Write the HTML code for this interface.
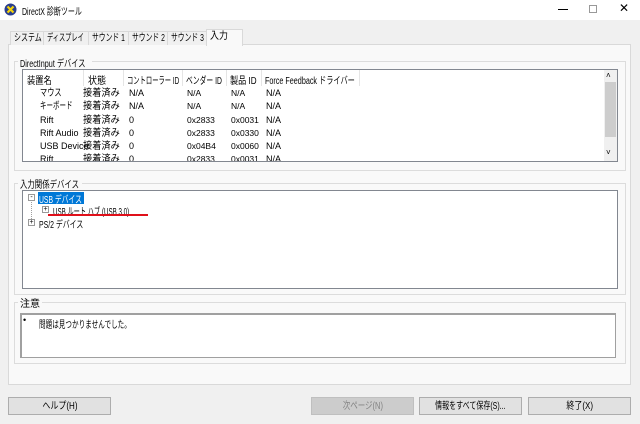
<!DOCTYPE html>
<html><head><meta charset="utf-8"><style>
*{margin:0;padding:0;box-sizing:border-box}
body{width:640px;height:424px;background:#f0f0f0;font-family:"Liberation Sans","Noto Sans CJK JP",sans-serif;font-size:9px;color:#000;position:relative;overflow:hidden}
.a{position:absolute;white-space:nowrap}
.s{display:inline-block;transform-origin:0 50%;white-space:nowrap;font-size:10px}
.grp{position:absolute;border:1px solid #dcdcdc}
.box{position:absolute;background:#fff;border:1px solid #828790}
.btn{position:absolute;background:#e1e1e1;border:1px solid #adadad;text-align:center;line-height:16px;height:18px}
.tab{position:absolute;top:31px;height:14px;line-height:13px;border:1px solid #d9d9d9;border-bottom:none;background:#f0f0f0;padding:0 3px;overflow:visible}
.r{line-height:13.3px;height:74px;overflow:hidden;top:87px}
</style></head><body>
<div class="a" style="left:0;top:0;width:640px;height:20px;background:#fff"></div>
<svg class="a" style="left:4px;top:3px" width="13" height="13"><circle cx="6.5" cy="6.5" r="6" fill="#2a3f8f"/><path d="M3.5 3.5L9.5 9.5M9.5 3.5L3.5 9.5" stroke="#f3d20a" stroke-width="2.2"/></svg>
<div class="a" style="left:22px;top:3px"><span class="s" style="transform:scaleX(.7)">DirectX 診断ツール</span></div>
<div class="a" style="left:558px;top:9px;width:10px;height:1px;background:#000"></div>
<div class="a" style="left:589px;top:5px;width:8px;height:8px;border:1px solid #999"></div>
<div class="a" style="left:619px;top:1px;font-size:12px">✕</div>

<div class="grp" style="left:8px;top:44px;width:623px;height:341px;border-color:#d9d9d9;background:#f9f9f9"></div>
<div class="tab" style="left:10px;width:34px"><span class="s" style="transform:scaleX(.7)">システム</span></div>
<div class="tab" style="left:43px;width:46px"><span class="s" style="transform:scaleX(.62)">ディスプレイ</span></div>
<div class="tab" style="left:88px;width:41px"><span class="s" style="transform:scaleX(.68)">サウンド 1</span></div>
<div class="tab" style="left:128px;width:40px"><span class="s" style="transform:scaleX(.68)">サウンド 2</span></div>
<div class="tab" style="left:167px;width:40px"><span class="s" style="transform:scaleX(.68)">サウンド 3</span></div>
<div class="tab" style="left:206px;top:29px;height:17px;width:37px;background:#f9f9f9;z-index:2"><span class="s" style="transform:scaleX(.9)">入力</span></div>

<div class="grp" style="left:14px;top:61px;width:612px;height:110px"></div>
<div class="a" style="left:18px;top:55px;background:#f9f9f9;padding:0 2px;width:74px"><span class="s" style="transform:scaleX(.72)">DirectInput デバイス</span></div>
<div class="box" style="left:22px;top:69px;width:596px;height:93px"></div>
<div class="a" style="left:604px;top:70px;width:13px;height:91px;background:#f0f0f0"></div>
<div class="a" style="left:605px;top:82px;width:11px;height:55px;background:#cdcdcd"></div>
<div class="a" style="left:606px;top:71px;font-size:8px">˄</div>
<div class="a" style="left:606px;top:148px;font-size:8px">˅</div>
<div class="a" style="left:23px;top:70px;width:337px;height:16px;border-right:1px solid #e5e5e5"></div>
<div class="a" style="left:83px;top:70px;height:16px;border-left:1px solid #e5e5e5"></div>
<div class="a" style="left:123px;top:70px;height:16px;border-left:1px solid #e5e5e5"></div>
<div class="a" style="left:182px;top:70px;height:16px;border-left:1px solid #e5e5e5"></div>
<div class="a" style="left:226px;top:70px;height:16px;border-left:1px solid #e5e5e5"></div>
<div class="a" style="left:261px;top:70px;height:16px;border-left:1px solid #e5e5e5"></div>
<div class="a" style="left:27px;top:72px"><span class="s" style="transform:scaleX(.83)">装置名</span></div>
<div class="a" style="left:88px;top:72px"><span class="s" style="transform:scaleX(.9)">状態</span></div>
<div class="a" style="left:127px;top:72px"><span class="s" style="transform:scaleX(.63)">コントローラー ID</span></div>
<div class="a" style="left:186px;top:72px"><span class="s" style="transform:scaleX(.68)">ベンダー ID</span></div>
<div class="a" style="left:230px;top:72px"><span class="s" style="transform:scaleX(.81)">製品 ID</span></div>
<div class="a" style="left:265px;top:72px"><span class="s" style="transform:scaleX(.72)">Force Feedback ドライバー</span></div>
<div class="a r" style="left:40px"><span class="s" style="transform:scaleX(.72)">マウス</span><br><span class="s" style="transform:scaleX(.65)">キーボード</span><br>Rift<br>Rift Audio<br>USB Device<br>Rift</div>
<div class="a r" style="left:83px;width:40px;background:transparent"><span class="s" style="transform:scaleX(.92)">接着済み</span><br><span class="s" style="transform:scaleX(.92)">接着済み</span><br><span class="s" style="transform:scaleX(.92)">接着済み</span><br><span class="s" style="transform:scaleX(.92)">接着済み</span><br><span class="s" style="transform:scaleX(.92)">接着済み</span><br><span class="s" style="transform:scaleX(.92)">接着済み</span></div>
<div class="a r" style="left:129px">N/A<br>N/A<br>0<br>0<br>0<br>0</div>
<div class="a r" style="left:187px;font-size:8.5px">N/A<br>N/A<br>0x2833<br>0x2833<br>0x04B4<br>0x2833</div>
<div class="a r" style="left:231px;font-size:8.5px">N/A<br>N/A<br>0x0031<br>0x0330<br>0x0060<br>0x0031</div>
<div class="a r" style="left:266px">N/A<br>N/A<br>N/A<br>N/A<br>N/A<br>N/A</div>

<div class="grp" style="left:14px;top:183px;width:612px;height:112px"></div>
<div class="a" style="left:18px;top:176px;background:#f9f9f9;padding:0 2px;width:64px"><span class="s" style="transform:scaleX(.74)">入力関係デバイス</span></div>
<div class="box" style="left:22px;top:190px;width:596px;height:99px"></div>
<div class="a" style="left:31px;top:199px;width:1px;height:24px;border-left:1px dotted #a0a0a0"></div>
<div class="a" style="left:28px;top:194px;width:7px;height:7px;border:1px solid #999;background:#fff;font-size:7px;line-height:5px;text-align:center">-</div>
<div class="a" style="left:38px;top:192px;width:46px;height:12px;background:#0078d7"></div>
<div class="a" style="left:39px;top:191px;color:#fff"><span class="s" style="transform:scaleX(.68)">USB デバイス</span></div>
<div class="a" style="left:42px;top:206px;width:7px;height:7px;border:1px solid #999;background:#fff;font-size:7px;line-height:5px;text-align:center">+</div>
<div class="a" style="left:53px;top:203px"><span class="s" style="transform:scaleX(.62)">USB ルート ハブ (USB 3.0)</span></div>
<div class="a" style="left:48px;top:214px;width:100px;height:2px;background:#e0101a"></div>
<div class="a" style="left:28px;top:219px;width:7px;height:7px;border:1px solid #999;background:#fff;font-size:7px;line-height:5px;text-align:center">+</div>
<div class="a" style="left:39px;top:216px"><span class="s" style="transform:scaleX(.69)">PS/2 デバイス</span></div>

<div class="grp" style="left:14px;top:302px;width:612px;height:62px"></div>
<div class="a" style="left:18px;top:295px;background:#f9f9f9;padding:0 2px"><span class="s">注意</span></div>
<div class="box" style="left:20px;top:313px;width:596px;height:45px;border-color:#a0a0a0;border-width:2px 1px 1px 2px"></div>
<div class="a" style="left:23px;top:315px">•</div>
<div class="a" style="left:39px;top:316px"><span class="s" style="transform:scaleX(.66)">問題は見つかりませんでした。</span></div>

<div class="btn" style="left:8px;top:397px;width:103px"><span class="s" style="transform:scaleX(.8);transform-origin:50% 50%">ヘルプ(H)</span></div>
<div class="btn" style="left:311px;top:397px;width:103px;background:#cccccc;border-color:#bfbfbf;color:#838383"><span class="s" style="transform:scaleX(.75);transform-origin:50% 50%">次ページ(N)</span></div>
<div class="btn" style="left:419px;top:397px;width:103px"><span class="s" style="transform:scaleX(.7);transform-origin:50% 50%">情報をすべて保存(S)...</span></div>
<div class="btn" style="left:528px;top:397px;width:103px"><span class="s" style="transform:scaleX(.8);transform-origin:50% 50%">終了(X)</span></div>
</body></html>
